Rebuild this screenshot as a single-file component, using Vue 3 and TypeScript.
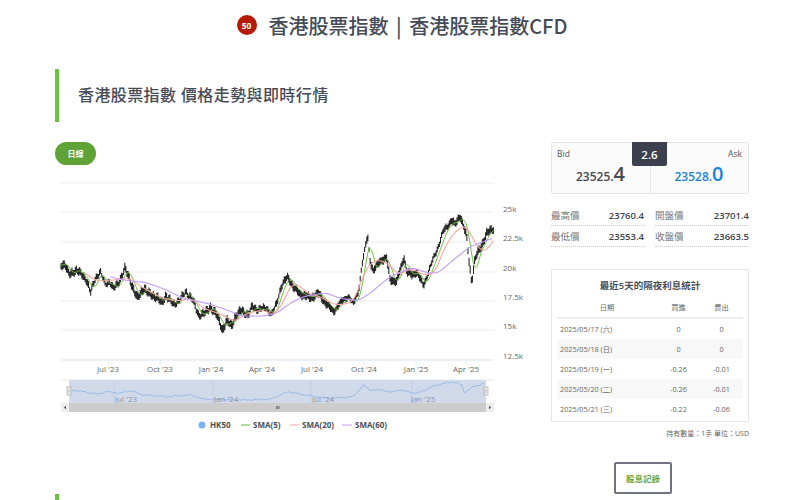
<script setup lang="ts">
type P = [number, number]

const stats = [
  { label: '最高價', value: '23760.4' },
  { label: '開盤價', value: '23701.4' },
  { label: '最低價', value: '23553.4' },
  { label: '收盤價', value: '23663.5' },
]
const rows = [
  ['2025/05/17 (六)', '0', '0'],
  ['2025/05/18 (日)', '0', '0'],
  ['2025/05/19 (一)', '-0.26', '-0.01'],
  ['2025/05/20 (二)', '-0.26', '-0.01'],
  ['2025/05/21 (三)', '-0.22', '-0.06'],
]

const left = (pts: P[]): P[] => pts.map(([x, y]) => [50 + x / 3, 200 + y / 3])
const right = (pts: P[]): P[] => pts.map(([x, y]) => [290 + x / 3, 200 + y / 3])

const main: P[] = [
  ...left([[33,195],[45,190],[58,225],[80,207],[95,225],[110,240],[122,278],[135,240],[150,215],[165,255],[180,245],[190,268],[205,250],[225,205],[240,240],[262,295],[282,262],[295,280],[320,290],[335,310],[348,285],[370,315],[390,300],[408,278],[425,295],[445,345],[465,340],[482,320],[500,345],[518,388],[530,362],[545,375],[555,350],[575,330],[595,345],[607,320],[625,330],[650,325],[665,348],[680,310],[692,265],[712,230]]),
  ...right([[0,240],[10,262],[30,280],[60,292],[85,280],[105,305],[130,335],[150,310],[175,290],[190,315],[205,275],[218,185],[233,105],[240,180],[250,215],[270,180],[290,175],[300,235],[320,245],[342,170],[350,215],[365,225],[380,215],[400,258],[420,205],[445,140],[460,95],[475,75],[485,60],[495,75],[510,45],[520,75],[530,110],[537,180],[545,245],[555,175],[570,145],[590,100],[610,85]]),
]
const sma20: P[] = [
  ...left([[100,215],[130,238],[150,243],[190,240],[240,235],[270,258],[300,275],[340,295],[385,303],[425,295],[460,325],[500,338],[525,348],[555,365],[590,340],[640,330],[670,345],[700,310]]),
  ...right([[0,255],[30,255],[50,280],[90,290],[130,312],[150,315],[190,305],[215,240],[235,195],[265,178],[300,195],[325,225],[365,205],[400,225],[435,220],[460,150],[490,100],[520,78],[535,85],[560,140],[590,158],[610,115]]),
]
const sma60: P[] = [
  ...left([[180,230],[220,240],[290,248],[350,270],[400,295],[480,312],[530,330],[575,348],[640,348],[680,340]]),
  ...right([[0,310],[40,290],[105,278],[150,295],[205,302],[240,280],[300,230],[365,203],[420,220],[445,218],[490,180],[540,140],[590,122],[610,113]]),
]
const navBase: P[] = ([[95,120],[130,125],[170,132],[205,125],[240,130],[270,122],[310,135],[380,140],[450,135],[490,147],[590,150],[690,148],[745,125],[810,138],[870,145],[940,140],[970,105],[990,120],[1030,120],[1050,127],[1080,120],[1130,130],[1190,105],[1240,95],[1265,105],[1272,128],[1300,110],[1335,100]] as P[]).map(([x, y]) => [40 + x / 3, 350 + y / 3])

const toPath = (pts: P[]) => pts.map(([x, y], i) => `${i ? 'L' : 'M'}${x.toFixed(1)} ${y.toFixed(1)}`).join('')

function at(pts: P[], x: number): number {
  for (let i = 1; i < pts.length; i++) {
    if (x <= pts[i][0]) {
      const [x0, y0] = pts[i - 1]
      const [x1, y1] = pts[i]
      return y0 + ((y1 - y0) * (x - x0)) / (x1 - x0 || 1)
    }
  }
  return pts[pts.length - 1][1]
}

const xs: number[] = []
for (let x = 61; x <= 494; x += 1.1) xs.push(x)

const candles = xs
  .map((x, i) => {
    const y = at(main, x) + Math.sin(i * 1.7) * 1.2 + Math.sin(i * 0.61) * 1.1
    const up = 1.8 + Math.abs(Math.sin(i * 2.3)) * 2.4
    const down = 1.8 + Math.abs(Math.cos(i * 3.1)) * 2.4
    return `M${x.toFixed(1)} ${(y - up).toFixed(1)}V${(y + down).toFixed(1)}`
  })
  .join('')

const sma5 = toPath(
  xs.map((x): P => {
    let sum = 0
    for (let k = -6; k <= 0; k++) sum += at(main, Math.max(61, x + k * 1.1))
    return [x, sum / 7]
  }),
)

const smooth = (pts: P[]) => {
  const out: P[] = []
  for (let x = pts[0][0]; x <= pts[pts.length - 1][0]; x += 2) {
    let sum = 0
    for (let k = -2; k <= 2; k++) sum += at(pts, Math.max(pts[0][0], x + k * 2))
    out.push([x, sum / 5])
  }
  return toPath(out)
}

const sma20Path = smooth(sma20)
const sma60Path = smooth(sma60)

const navPts: P[] = []
for (let x = navBase[0][0], i = 0; x <= navBase[navBase.length - 1][0]; x += 1.5, i++) {
  navPts.push([x, at(navBase, x) + Math.sin(i * 1.9) * 0.5 + Math.sin(i * 0.7) * 0.4])
}
const navPath = toPath(navPts)

const grid = [183, 212, 242, 272, 301, 330]
const yLabels: [string, number][] = [['25k', 212], ['22.5k', 241], ['20k', 271], ['17.5k', 300], ['15k', 329], ['12.5k', 359]]
const xLabels: [string, number][] = [["Jul '23", 108], ["Oct '23", 160], ["Jan '24", 211], ["Apr '24", 262], ["Jul '24", 312], ["Oct '24", 364], ["Jan '25", 416], ["Apr '25", 466]]
const navLabels: [string, number, number][] = [["Jul '23", 126, 114], ["Jan '24", 226, 213], ["Jul '24", 323, 311], ["Jan '25", 423, 412]]
</script>

<template>
  <div class="page">
    <header class="title">
      <span class="badge">50</span>
      <h1>香港股票指數 | 香港股票指數CFD</h1>
    </header>

    <h2 class="section-head">香港股票指數 價格走勢與即時行情</h2>

    <main class="content">
      <section class="chart-col">
        <button class="pill">日線</button>
        <svg class="chart" viewBox="55 175 470 265" width="470" height="265">
          <line v-for="y in grid" :key="y" x1="61" x2="494" :y1="y" :y2="y" stroke="#eeeeee" stroke-width="1.2" />
          <line x1="61" x2="494" y1="360" y2="360" stroke="#e4edf8" stroke-width="1.6" />
          <line v-for="t in xLabels" :key="t[1]" :x1="t[1]" :x2="t[1]" y1="360" y2="365" stroke="#e4edf8" />

          <path :d="candles" stroke="#1f1f1f" stroke-width="1.05" fill="none" />
          <path :d="sma5" stroke="#6fbd42" stroke-width="1" fill="none" />
          <path :d="sma20Path" stroke="#f7a6a0" stroke-width="1.1" fill="none" />
          <path :d="sma60Path" stroke="#c49cf5" stroke-width="1.1" fill="none" />

          <text v-for="t in yLabels" :key="t[0]" x="503" :y="t[1]" class="axis">{{ t[0] }}</text>
          <text v-for="t in xLabels" :key="t[0]" :x="t[1]" y="372" text-anchor="middle" class="axis">{{ t[0] }}</text>

          <line x1="61" x2="494" y1="380" y2="380" stroke="#e8e8e8" />
          <rect x="69" y="380" width="417" height="23" fill="#d0daeb" />
          <line v-for="t in navLabels" :key="t[2]" :x1="t[2]" :x2="t[2]" y1="380" y2="403" stroke="#c3cee2" />
          <path :d="navPath" stroke="#8ab0e3" stroke-width="0.8" fill="none" />
          <text v-for="t in navLabels" :key="t[0]" :x="t[1]" y="402" text-anchor="middle" class="axis nav-label">{{ t[0] }}</text>
          <g v-for="hx in [69, 486]" :key="hx">
            <rect :x="hx - 2" y="387" width="4" height="8" fill="#f2f2f2" stroke="#999999" stroke-width="0.6" />
            <line :x1="hx - 0.6" :x2="hx - 0.6" y1="389" y2="393" stroke="#999999" stroke-width="0.4" />
            <line :x1="hx + 0.6" :x2="hx + 0.6" y1="389" y2="393" stroke="#999999" stroke-width="0.4" />
          </g>

          <rect x="61" y="403" width="433" height="9" fill="#cccccc" />
          <rect x="61" y="403" width="8" height="9" fill="#eeeeee" />
          <rect x="486" y="403" width="8" height="9" fill="#eeeeee" />
          <path d="M66 405.8 L64 407.5 L66 409.2Z" fill="#444444" />
          <path d="M489 405.8 L491 407.5 L489 409.2Z" fill="#444444" />
          <path d="M276.5 406v3M277.8 406v3M279.1 406v3" stroke="#444444" stroke-width="0.6" />

          <circle cx="202" cy="425" r="3.5" fill="#7cb5ec" />
          <text x="210" y="428" class="legend">HK50</text>
          <line x1="241" x2="250" y1="425" y2="425" stroke="#69b83c" stroke-width="1" />
          <text x="253" y="428" class="legend">SMA(5)</text>
          <line x1="290" x2="299" y1="425" y2="425" stroke="#f7a6a0" stroke-width="1" />
          <text x="302" y="428" class="legend">SMA(20)</text>
          <line x1="342" x2="352" y1="425" y2="425" stroke="#c49cf5" stroke-width="1" />
          <text x="355" y="428" class="legend">SMA(60)</text>
        </svg>
      </section>

      <aside class="side">
        <div class="quote">
          <div class="spread">2.6</div>
          <div class="quote-cell">
            <span class="quote-label">Bid</span>
            <span class="quote-value">23525.<b>4</b></span>
          </div>
          <div class="quote-cell ask">
            <span class="quote-label">Ask</span>
            <span class="quote-value">23528.<b>0</b></span>
          </div>
        </div>

        <div class="stats">
          <div v-for="s in stats" :key="s.label" class="stat">
            <span class="stat-label">{{ s.label }}</span>
            <span class="stat-value">{{ s.value }}</span>
          </div>
        </div>

        <div class="swap">
          <h3>最近5天的隔夜利息統計</h3>
          <table>
            <thead>
              <tr><th class="date-h">日期</th><th>買進</th><th>賣出</th></tr>
            </thead>
            <tbody>
              <tr v-for="r in rows" :key="r[0]">
                <td class="date">{{ r[0] }}</td>
                <td>{{ r[1] }}</td>
                <td>{{ r[2] }}</td>
              </tr>
            </tbody>
          </table>
        </div>
        <p class="note">持有數量：1手 單位：USD</p>
        <button class="record">股息記錄</button>
      </aside>
    </main>

    <div class="next-head"></div>
  </div>
</template>

<style>
html, body { margin: 0; background: #fff; overflow: hidden; }
</style>

<style scoped>
.page {
  width: 800px;
  height: 500px;
  overflow: hidden;
  box-sizing: border-box;
  padding: 0 51px 0 55px;
  font-family: "Open Sans", "Noto Sans CJK TC", sans-serif;
  color: #40454f;
}
.title {
  height: 52px;
  display: flex;
  align-items: center;
  justify-content: center;
  gap: 12px;
  padding-bottom: 2px;
  box-sizing: border-box;
}
.badge {
  width: 20px;
  height: 20px;
  border-radius: 50%;
  background: #b51a05;
  color: #fff;
  font-size: 8.5px;
  font-weight: 700;
  display: flex;
  align-items: center;
  justify-content: center;
}
h1 {
  margin: 0;
  font-family: "Noto Sans CJK TC", sans-serif;
  font-size: 20px;
  word-spacing: 3px;
  font-weight: 500;
  color: #454b57;
}
.section-head {
  margin: 17px 0 0;
  height: 53px;
  box-sizing: border-box;
  border-left: 4px solid #6cc045;
  padding: 0 0 4px 19px;
  display: flex;
  align-items: center;
  font-size: 16px;
  letter-spacing: 0.4px;
  font-weight: 500;
  color: #454b57;
}
.content {
  margin-top: 20px;
  display: flex;
  gap: 26px;
  height: 352px;
}
.chart-col { width: 470px; flex: none; }
.pill {
  display: block;
  width: 41px;
  height: 23px;
  padding: 0;
  border: 0;
  border-radius: 12px;
  background: #5fa336;
  color: #fff;
  font: 700 8px "Open Sans", "Noto Sans CJK TC", sans-serif;
}
.chart { display: block; margin-top: 10px; }
.axis { font-size: 8px; fill: #666; }
.nav-label { fill: #8b94a5; }
.legend { font-size: 8px; font-weight: 700; fill: #4a4f58; }

.side { width: 198px; flex: none; }
.quote {
  position: relative;
  height: 52px;
  box-sizing: border-box;
  border: 1px solid #e4e4e4;
  border-radius: 2px;
  display: grid;
  grid-template-columns: 1fr 1fr;
  background: #fbfbfb;
}
.spread {
  position: absolute;
  left: 80px;
  top: -1px;
  width: 35px;
  height: 24px;
  background: #3b3f4e;
  color: #fff;
  font-size: 11.5px;
  font-weight: 600;
  display: flex;
  align-items: center;
  justify-content: center;
  border-radius: 0 0 2px 2px;
}
.quote-cell {
  padding: 5px 6px 0 5px;
  display: flex;
  flex-direction: column;
}
.quote-cell.ask { border-left: 1px solid #e4e4e4; align-items: flex-end; }
.quote-label { font-size: 8.5px; color: #555; line-height: 12px; }
.quote-value {
  align-self: center;
  font-size: 12px;
  font-weight: 600;
  line-height: 28px;
  color: #43474f;
}
.quote-value b { font-size: 20px; font-weight: 600; }
.ask .quote-value { color: #1a82d8; }

.stats {
  margin-top: 11px;
  display: grid;
  grid-template-columns: 93px 94px;
  column-gap: 11px;
}
.stat {
  height: 21px;
  box-sizing: border-box;
  border-bottom: 1px dotted #c9c9c9;
  display: flex;
  justify-content: space-between;
  align-items: center;
}
.stat-label { font-size: 9.5px; color: #777; }
.stat-value { font-size: 9.5px; font-weight: 600; color: #40454f; }

.swap {
  margin-top: 22px;
  height: 153px;
  box-sizing: border-box;
  border: 1px solid #e6e6e6;
  padding: 9px 5px 0;
}
h3 {
  margin: 0;
  font-size: 9.5px;
  font-weight: 600;
  line-height: 14px;
  text-align: center;
  color: #4a4f58;
}
table {
  width: 100%;
  margin-top: 4px;
  border-collapse: collapse;
  table-layout: fixed;
  font-size: 7.3px;
  color: #666;
}
th {
  font-weight: 400;
  height: 18px;
  width: 41px;
  border-bottom: 2px solid #eeeeee;
  text-align: center;
}
th.date-h { width: auto; }
td { height: 20px; padding: 0; text-align: center; }
td.date { text-align: left; padding-left: 3px; }
tbody tr:nth-child(even) { background: #f8f8f8; }
.note {
  margin: 6px 0 0;
  font-size: 7px;
  line-height: 12px;
  text-align: right;
  color: #666;
}
.record {
  display: block;
  width: 58px;
  height: 32px;
  margin: 22px 0 0 63px;
  padding: 0;
  background: #fff;
  border: 2px solid #6f7480;
  border-radius: 2px;
  color: #67a644;
  font: 700 8.5px "Open Sans", "Noto Sans CJK TC", sans-serif;
}
.next-head {
  width: 4px;
  height: 6px;
  background: #6cc045;
}
</style>
